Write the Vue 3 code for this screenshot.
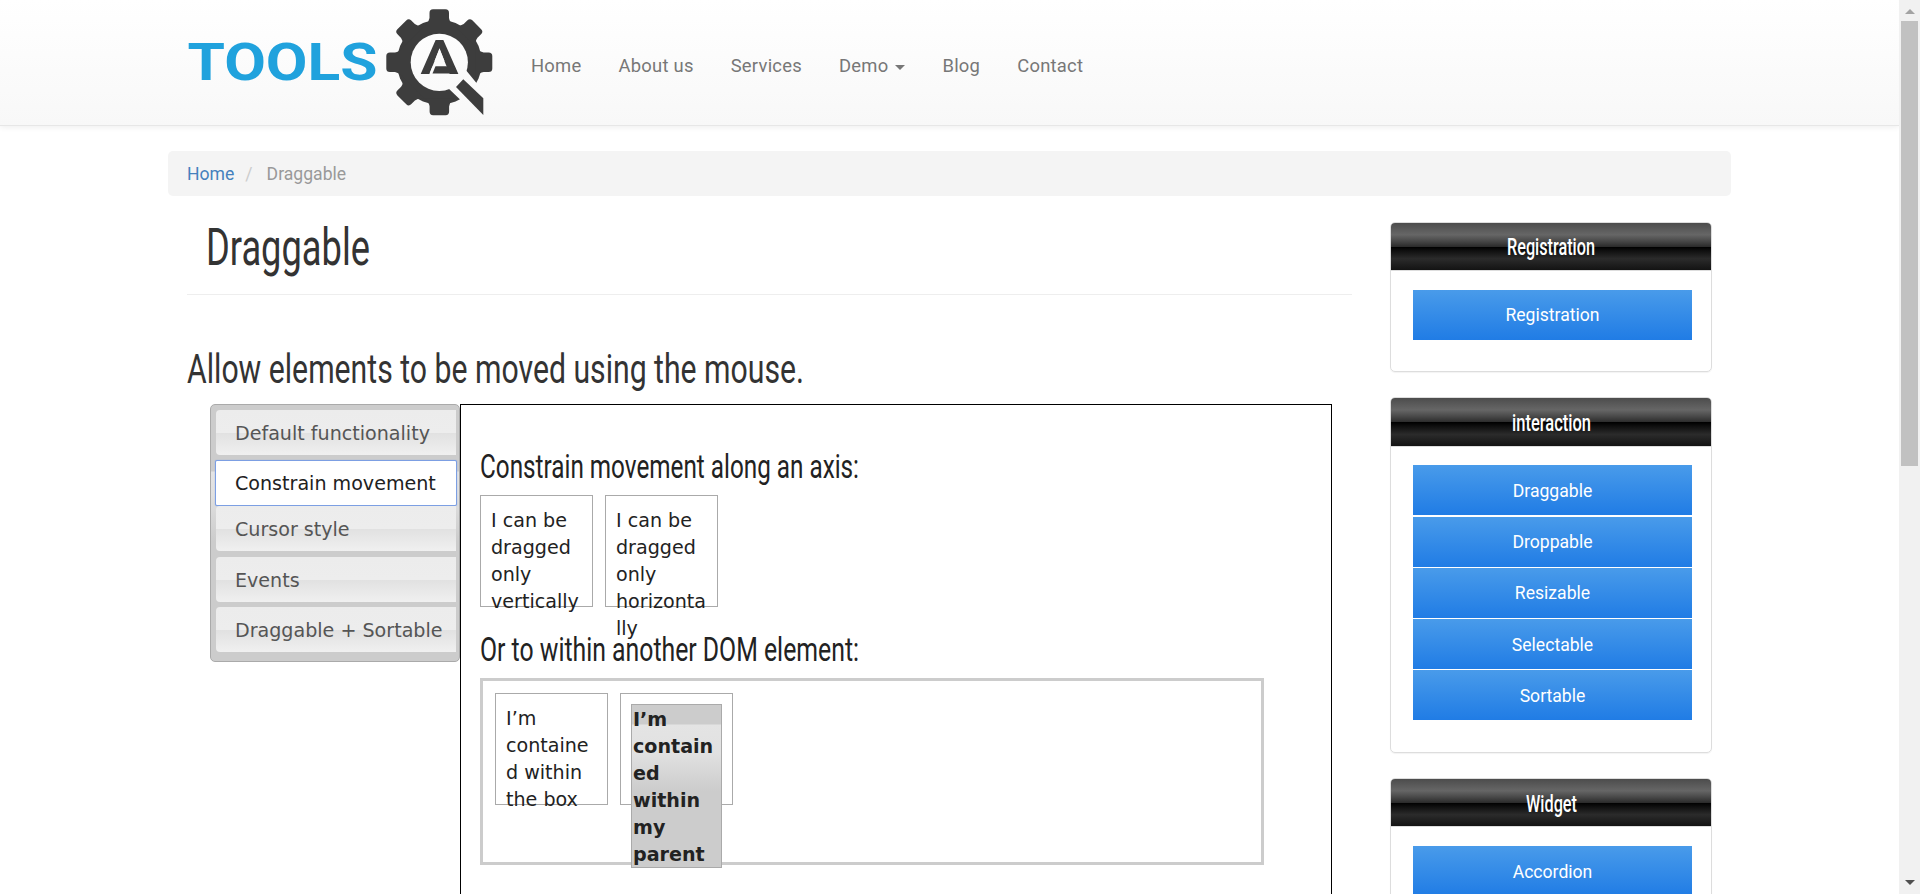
<script setup>
import { h } from 'vue'

const FitText = (p) =>
  h('svg', { width: p.width, height: p.height, style: 'display:block;overflow:visible' }, [
    h('text', {
      x: 0,
      y: p.base,
      textLength: p.width,
      lengthAdjust: 'spacingAndGlyphs',
      'font-family': 'Roboto, sans-serif',
      'font-size': p.size,
      'font-weight': p.weight || 450,
      fill: p.color
    }, p.text)
  ])
FitText.props = ['text', 'width', 'height', 'base', 'size', 'weight', 'color']

const nav = ['Home', 'About us', 'Services', 'Demo', 'Blog', 'Contact']
const tabs = ['Default functionality', 'Constrain movement', 'Cursor style', 'Events', 'Draggable + Sortable']
const panels = [
  { title: 'Registration', w: 88, links: ['Registration'] },
  { title: 'interaction', w: 79, links: ['Draggable', 'Droppable', 'Resizable', 'Selectable', 'Sortable'] },
  { title: 'Widget', w: 51, links: ['Accordion'] }
]
const teeth = [0, 45, 90, 180, 225, 270, 315]
</script>

<template>
  <div class="window">
    <div class="page">
      <header class="navbar">
        <svg class="logo" width="312" height="120" viewBox="184 0 312 120">
          <defs>
            <mask id="lens">
              <rect x="184" y="0" width="312" height="120" fill="#fff" />
              <circle cx="439.3" cy="62.3" r="28.6" fill="#000" />
              <path d="M465 69 L478.5 85.5 L496 90 V120 H472 L459.8 99.3 L447 87 Z" fill="#000" />
            </mask>
          </defs>
          <text x="187.5" y="79.5" textLength="190" lengthAdjust="spacingAndGlyphs" class="word">TOOLS</text>
          <g mask="url(#lens)" fill="#3d3d3d">
            <circle cx="439.3" cy="62.3" r="42.5" />
            <path
              v-for="a in teeth"
              :key="a"
              :transform="`rotate(${a} 439.3 62.3)`"
              d="M425 26 Q429 22 429.5 18 V13 Q429.5 9.3 433 9.3 H445.5 Q449 9.3 449 13 V18 Q449.5 22 454 26 Z"
            />
          </g>
          <path d="M456 87 L463.3 79.3 L483.3 98.3 V115 Z" fill="#3d3d3d" />
          <text x="420.5" y="73.5" textLength="38" lengthAdjust="spacingAndGlyphs" class="mark">A</text>
          <path d="M439.5 49 L449.5 73.6 H429.5 Z" fill="#fbfbfb" />
          <path d="M435.5 66.3 H454.5 L457.5 73.5 H432.5 Z" fill="#3d3d3d" />
        </svg>
        <nav class="menu">
          <a v-for="n in nav" :key="n">{{ n }}<i v-if="n === 'Demo'" class="caret"></i></a>
        </nav>
      </header>

      <div class="container">
        <div class="crumbs"><a>Home</a><span class="slash">/</span><span class="here">Draggable</span></div>
        <div class="row">
          <main class="content">
            <h1 class="title"><FitText text="Draggable" :width="164" :height="60" :base="43" :size="51.5" color="#333" /></h1>
            <h2 class="lead"><FitText text="Allow elements to be moved using the mouse." :width="617" :height="50" :base="39" :size="41.5" color="#333" /></h2>
            <div class="demo">
              <ul class="tabs">
                <li v-for="(t, i) in tabs" :key="t" :class="{ active: i === 1 }">{{ t }}</li>
              </ul>
              <section class="pane">
                <h3><FitText text="Constrain movement along an axis:" :width="379" :height="40" :base="29" :size="33.5" color="#222" /></h3>
                <div class="boxes">
                  <div class="box">I can be dragged only vertically</div>
                  <div class="box">I can be dragged only horizontally</div>
                </div>
                <h3 class="second"><FitText text="Or to within another DOM element:" :width="379" :height="40" :base="29" :size="33.5" color="#222" /></h3>
                <div class="wrapper">
                  <div class="box">I’m contained within the box</div>
                  <div class="box"><p class="widget">I’m contained within my parent</p></div>
                </div>
              </section>
            </div>
          </main>
          <aside class="side">
            <section v-for="p in panels" :key="p.title" class="panel" :class="p.title">
              <h4><FitText :text="p.title" :width="p.w" :height="30" :base="22" :size="23.4" :weight="500" color="#fff" /></h4>
              <div class="links"><a v-for="l in p.links" :key="l">{{ l }}</a></div>
            </section>
          </aside>
        </div>
      </div>
    </div>
    <div class="scrollbar"><i class="up"></i><b class="thumb"></b><i class="down"></i></div>
  </div>
</template>

<style>
html, body { overflow: hidden; background: #fff; }
</style>

<style scoped>
* { box-sizing: border-box; margin: 0; padding: 0; }
.window { display: grid; grid-template-columns: 1899px 21px; width: 1920px; height: 894px; overflow: hidden; font: 18px/26px Roboto, sans-serif; }
.page { height: 894px; overflow: hidden; }
.navbar { height: 126px; display: flex; align-items: flex-start; padding-left: 184px; background: linear-gradient(#fff, #f8f8f8); border-bottom: 1px solid #e7e7e7; box-shadow: 0 1px 6px rgba(0, 0, 0, .075); }
.logo { flex: none; }
.word { font: 700 52px Roboto, sans-serif; fill: #20a2dd; }
.mark { font: 700 49px Roboto, sans-serif; fill: #3d3d3d; }
.menu { display: flex; gap: 37px; padding: 53px 0 0 35px; color: #777; }
.menu a { display: flex; align-items: center; white-space: nowrap; font-size: 18.4px; letter-spacing: .25px; }
.caret { margin-left: 7px; margin-top: 3px; border: 5px solid transparent; border-top-color: #777; border-bottom: 0; }

.container { width: 1563px; margin: 25px 0 0 168px; }
.crumbs { height: 45px; padding: 10px 19px; background: #f4f4f4; border-radius: 5px; color: #999; display: flex; font-size: 17.6px; }
.crumbs a { color: #4581bd; }
.slash { color: #ccc; margin: 0 14px 0 11px; }
.row { display: flex; }
.content { width: 1165px; margin-left: 19px; }
.title { height: 99px; padding: 26px 0 0 19px; border-bottom: 1px solid #eee; }
.lead { height: 109px; padding-top: 49px; }
.demo { display: flex; align-items: flex-start; padding-left: 23px; font-family: "DejaVu Sans", sans-serif; font-size: 19.1px; }
.tabs { list-style: none; width: 250px; height: 258px; padding: 5px 3px 0 5px; border: 1px solid #aaa; border-radius: 5px; background: linear-gradient(#ccc 0 66px, #e4e4e4 67px, #e0e0e0 90px, #ccc 136px); color: #555; }
.tabs li { height: 45px; margin-bottom: 5px; padding: 11px 0 0 19px; line-height: 26px; white-space: nowrap; border-radius: 4px 0 0 4px; background: linear-gradient(#ececec, #ededed 50%, #e1e1e1 51%, #f0f0f0); }
.tabs li.active { background: #fff; color: #212121; border: 1px solid #7c9fe3; margin: 5px -1px 0 -1px; height: 46px; padding: 10px 0 0 19px; border-radius: 2px; box-shadow: 0 0 1px #6f98e6; }
.tabs li:nth-child(3) { margin-bottom: 6px; }
.pane { width: 872px; height: 520px; border: 1px solid #000; padding: 44px 19px; color: #222; line-height: 27px; }
.boxes { display: flex; gap: 12px; margin-top: 6px; }
.box { width: 113px; height: 112px; border: 1px solid #aaa; padding: 11px 10px; overflow-wrap: break-word; }
.second { margin-top: 25px; }
.wrapper { display: flex; gap: 12px; width: 784px; height: 187px; margin-top: 6px; border: 3px solid #ccc; padding: 12px; }
.widget { width: 91px; height: 164px; margin-top: -1px; padding: 1px 0 0 1px; border: 1px solid #aaa; font-weight: 700; color: #222; background: linear-gradient(#ccc 0 19px, #e4e4e4 20px, #e1e1e1 48px, #ccc 86px); }

.side { width: 322px; margin: 26px 0 0 38px; display: flex; flex-direction: column; gap: 25px; }
.panel { border: 1px solid #ddd; border-radius: 5px; box-shadow: 0 1px 1px rgba(0, 0, 0, .05); height: 150px; overflow: hidden; flex: none; }
.panel.interaction { height: 356px; }
.panel.Widget { height: 250px; }
.panel h4 { height: 48px; display: flex; justify-content: center; padding-top: 10px; border-bottom: 1px solid #ddd; background: linear-gradient(#4c4c4c 0%, #595959 12%, #666 25%, #474747 39%, #2c2c2c 50%, #000 51%, #111 60%, #2b2b2b 76%, #1c1c1c 91%, #131313 100%); }
.panel.interaction h4 { height: 49px; padding-top: 11px; }
.panel.Widget h4 { padding-top: 11px; }
.links { display: flex; flex-direction: column; gap: 1px; padding: 19px 19px 0 22px; }
.interaction .links { padding-top: 18px; }
.links a { height: 50px; line-height: 50px; text-align: center; color: #fff; font-size: 17.6px; background: linear-gradient(#499bea, #207ce5); }
.interaction .links a, .Widget .links a { line-height: 52px; }
.interaction .links a:nth-child(2), .interaction .links a:nth-child(3) { line-height: 50px; }
.interaction .links a:first-child { margin-bottom: 1px; }

.scrollbar { background: #f1f1f1; display: flex; flex-direction: column; align-items: center; height: 894px; }
.thumb { width: 17px; height: 445px; margin-top: 7px; background: #c1c1c1; }
.up { margin-top: 9px; border: 5px solid transparent; border-top: 0; border-bottom-color: #a3a3a3; }
.down { margin-top: auto; margin-bottom: 9px; border: 5px solid transparent; border-bottom: 0; border-top-color: #505050; }
</style>
